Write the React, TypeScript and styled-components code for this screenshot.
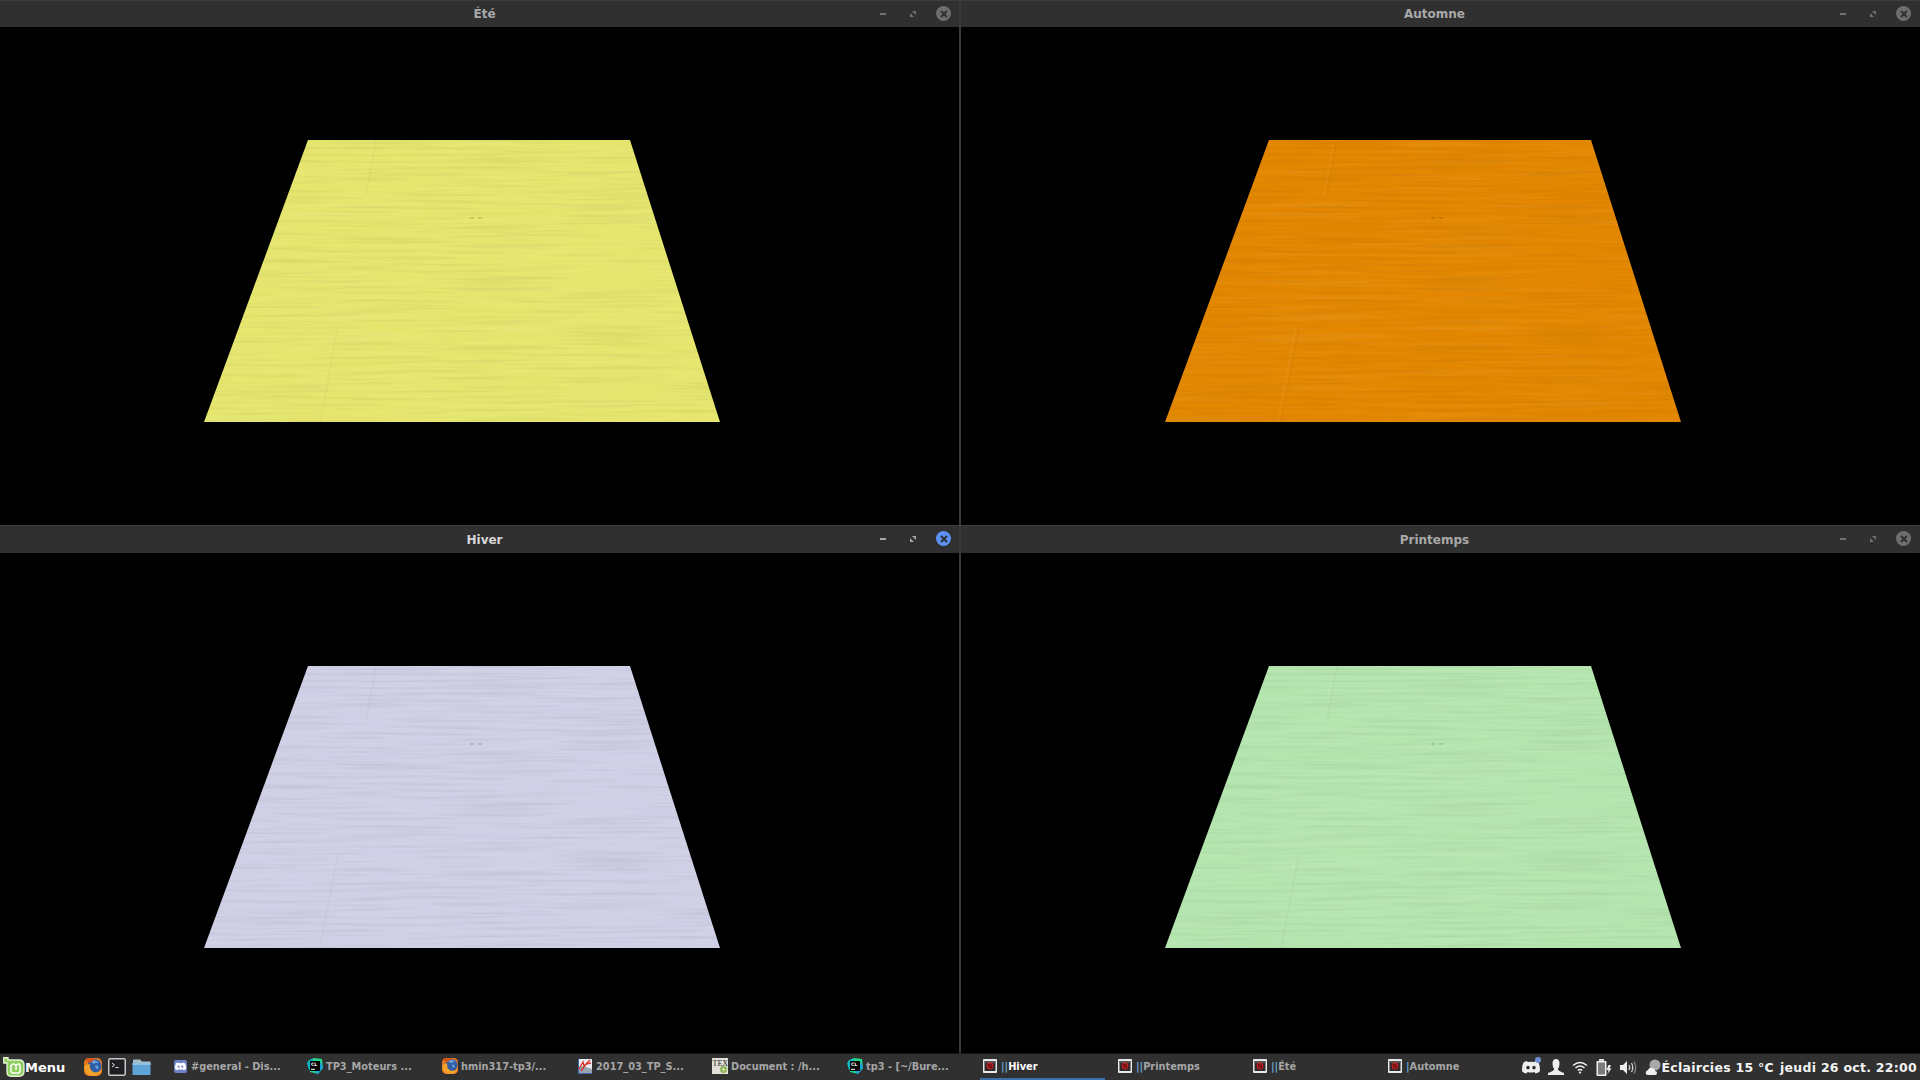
import * as React from 'react'
import styled, { createGlobalStyle } from 'styled-components'

const GlobalStyle = createGlobalStyle`
  html, body {
    margin: 0;
    padding: 0;
    background: #000;
    overflow: hidden;
  }
  #root {
    width: 1920px;
    height: 1080px;
  }
`

const seasons = [
  { title: 'Été', color: '#e6e66f', focus: false },
  { title: 'Automne', color: '#e38700', focus: false },
  { title: 'Hiver', color: '#d0d0e6', focus: true },
  { title: 'Printemps', color: '#b6e6b0', focus: false },
]

const PLANE = '308,113 630,113 720,395 204,395'

const Plane: React.FC<{ color: string; id: string }> = ({ color, id }) => (
  <PlaneSvg viewBox="0 0 959 500">
    <defs>
      <filter id={id} x="0" y="0" width="100%" height="100%">
        <feTurbulence type="fractalNoise" baseFrequency="0.007 0.26" numOctaves={3} seed={4} />
        <feColorMatrix
          type="matrix"
          values="0 0 0 0 1  0 0 0 0 1  0 0 0 0 1  1.5 0 0 0 -0.62"
        />
      </filter>
      <filter id={id + 'd'} x="0" y="0" width="100%" height="100%">
        <feTurbulence type="fractalNoise" baseFrequency="0.009 0.3" numOctaves={3} seed={11} />
        <feColorMatrix
          type="matrix"
          values="0 0 0 0 0  0 0 0 0 0  0 0 0 0 0  1.2 0 0 0 -0.52"
        />
      </filter>
      <clipPath id={id + 'c'}>
        <polygon points={PLANE} />
      </clipPath>
    </defs>
    <polygon points={PLANE} fill={color} />
    <g clipPath={`url(#${id}c)`}>
      <rect x="200" y="113" width="525" height="282" filter={`url(#${id})`} opacity="0.09" />
      <rect x="200" y="113" width="525" height="282" filter={`url(#${id}d)`} opacity="0.1" />
      <path d="M373 113 L363 168 M335 300 L317 395" stroke="#fff" strokeOpacity="0.035" strokeWidth="3" fill="none" />
      <path d="M376 113 L366 168 M338 300 L320 395" stroke="#000" strokeOpacity="0.025" strokeWidth="2" fill="none" />
      <path d="M470 191 h4 M478 191 h4" stroke="#000" strokeOpacity="0.16" strokeWidth="1.5" />
    </g>
  </PlaneSvg>
)

const CinnamonControls: React.FC<{ focus: boolean; right: boolean }> = ({ focus, right }) => (
  <Controls $right={right}>
    <Minimize $focus={focus} />
    <Maximize viewBox="0 0 6 6" width="6" height="6">
      <path d="M2 0 H6 V4 Z M0 2 L4 6 H0 Z" fill={focus ? '#a8a8a8' : '#707070'} />
    </Maximize>
    <CloseBtn $focus={focus}>
      <svg viewBox="0 0 8 8" width="8" height="8">
        <path d="M1 1 L7 7 M7 1 L1 7" stroke="#303030" strokeWidth="2" />
      </svg>
    </CloseBtn>
  </Controls>
)

const MintLogo = () => (
  <svg width="22" height="20" viewBox="0 0 22 20">
    <path d="M0.8 0.8 H5 V3 H16 Q21 3 21 8 V14 Q21 19.2 16 19.2 H8 Q4 19.2 4 15 V6 H0.8 Z" fill="#8fcf5e" stroke="#e3f3d4" strokeWidth="1.4" />
    <path d="M8 8 V14 Q8 16 10 16 H15 Q17 16 17 14 V9 Q17 7 15.2 7 Q13.5 7 13 9 V13 M13 9 Q12.5 7 10.8 7 Q9 7 8.5 8" fill="none" stroke="#fff" strokeWidth="1.5" />
  </svg>
)

const Firefox: React.FC<{ size?: number }> = ({ size = 18 }) => (
  <svg width={size} height={size} viewBox="0 0 18 18">
    <rect width="18" height="18" rx="5" fill="#e8791e" />
    <circle cx="10.5" cy="8" r="7" fill="#2f5fa8" />
    <path d="M7 3 Q12 1 15 5 Q12 4 10 6 Q8 5 7 3 Z" fill="#6fa0da" />
    <path d="M12 7 Q15 8 14 11 Q12 11 11 9 Z" fill="#6fa0da" />
    <path d="M0 9 Q1 18 9 18 Q16 18 18 12 Q13 16 8.5 13.5 Q5 11 6 6 Q2 6 0 9 Z" fill="#f3a12a" />
    <path d="M1 1 Q7 -1 12 1 Q8 2 6.5 5 Q3 4 1 1 Z" fill="#d4551a" />
  </svg>
)

const TerminalIcon = () => (
  <svg width="18" height="18" viewBox="0 0 18 18">
    <rect x="0.75" y="0.75" width="16.5" height="16.5" rx="1.5" fill="#1d1d22" stroke="#c8c8c8" strokeWidth="1.5" />
    <path d="M4 5 L6.5 7 L4 9" fill="none" stroke="#e6e6e6" strokeWidth="1" />
    <path d="M7.5 9.5 H10.5" stroke="#e6e6e6" strokeWidth="1" />
  </svg>
)

const FolderIcon = () => (
  <svg width="19" height="16" viewBox="0 0 19 16">
    <path d="M1 1.5 Q1 0.5 2 0.5 H8 L10 2.5 H18 Q18.5 2.5 18.5 3 V5 H1 Z" fill="#a9bcc9" />
    <rect x="0.5" y="4" width="18" height="12" rx="0.5" fill="#5ea4d6" />
    <rect x="0.5" y="4" width="18" height="2" fill="#8cc0e4" />
  </svg>
)

const DiscordGlyph: React.FC<{ size: number; fill: string; hole: string }> = ({ size, fill, hole }) => (
  <svg width={size} height={size * 0.78} viewBox="0 0 18 14">
    <path d="M5 1 Q2.8 1.4 1.5 2.6 Q-0.4 6.6 0.2 11.4 Q2 13 4.6 13.6 L5.6 12 Q8.9 13 12.4 12 L13.4 13.6 Q16 13 17.8 11.4 Q18.4 6.6 16.5 2.6 Q15.2 1.4 13 1 L12.4 2 Q9 1.4 5.6 2 Z" fill={fill} />
    <ellipse cx="6" cy="7.6" rx="1.7" ry="1.9" fill={hole} />
    <ellipse cx="12" cy="7.6" rx="1.7" ry="1.9" fill={hole} />
  </svg>
)

const DiscordTile = () => (
  <Tile $bg="#6f82c8">
    <DiscordGlyph size={11} fill="#fff" hole="#6f82c8" />
  </Tile>
)

const ClionIcon = () => (
  <svg width="16" height="16" viewBox="0 0 16 16">
    <path d="M1 3 L7 0 L15 1 L16 10 L11 16 L3 14 Z" fill="#21d789" />
    <path d="M0 5 L4 1 L8 3 L2 12 Z" fill="#09b8c9" />
    <path d="M11 16 L16 10 L14 4 L8 14 Z" fill="#1a9dd8" />
    <rect x="3" y="3" width="10" height="10" fill="#000" />
    <text x="4" y="8.4" fontFamily="'DejaVu Sans', sans-serif" fontWeight="700" fontSize="4.6" fill="#fff">CL</text>
    <rect x="4" y="10.8" width="4" height="1" fill="#fff" />
  </svg>
)

const ChartDoc = () => (
  <svg width="14" height="15" viewBox="0 0 14 15">
    <rect width="14" height="15" fill="#e9ecf2" />
    <path d="M0 15 V9 L5 7 L14 10 V15 Z" fill="#9aa4b3" />
    <path d="M0 15 V0" stroke="#3f66ad" strokeWidth="2" />
    <path d="M1 10 L5 3 L6 7 L12 1 M3 12 L8 5 L13 4" fill="none" stroke="#d9302a" strokeWidth="1.3" />
    <path d="M0 14.5 H14" stroke="#3f66ad" />
  </svg>
)

const TexDoc = () => (
  <svg width="16" height="16" viewBox="0 0 16 16">
    <rect width="16" height="16" fill="#dfdfd8" />
    <text x="0.5" y="7.5" fontFamily="'Liberation Serif', serif" fontSize="8" fill="#222">TEX</text>
    <circle cx="11.5" cy="11.5" r="3.4" fill="#8ab04e" />
    <path d="M11.5 9.5 V13.5 M9.5 11.5 H13.5" stroke="#dfeec8" strokeWidth="0.9" />
  </svg>
)

const AppWindowIcon = () => (
  <svg width="14" height="14" viewBox="0 0 14 14">
    <rect width="14" height="14" rx="0.8" fill="#e8e8e8" />
    <rect x="1.5" y="2" width="11" height="10" fill="#2a2a2a" />
    <rect x="1.5" y="2" width="11" height="2" fill="#555" />
    <circle cx="7" cy="7" r="3.4" fill="#d2202a" />
    <path d="M5 5 L9 9" stroke="#30090a" strokeWidth="0.9" />
    <circle cx="7" cy="7" r="2" fill="none" stroke="#30090a" strokeWidth="0.7" />
  </svg>
)

const tasks = [
  { icon: <DiscordTile />, label: '#general - Dis...' },
  { icon: <ClionIcon />, label: 'TP3_Moteurs ...' },
  { icon: <Firefox size={16} />, label: 'hmin317-tp3/...' },
  { icon: <ChartDoc />, label: '2017_03_TP_S...' },
  { icon: <TexDoc />, label: 'Document : /h...' },
  { icon: <ClionIcon />, label: 'tp3 - [~/Bure...' },
]

const windows = [
  { bars: 2, label: 'Hiver', active: true },
  { bars: 2, label: 'Printemps', active: false },
  { bars: 2, label: 'Été', active: false },
  { bars: 1, label: 'Automne', active: false },
]

const App: React.FC = () => (
  <>
    <GlobalStyle />
    <Screen>
      <Desktop>
        {seasons.map((s, i) => (
          <Win key={s.title}>
            <TitleBar>
              <Title $focus={s.focus} $right={i % 2 === 1}>{s.title}</Title>
              <CinnamonControls focus={s.focus} right={i % 2 === 1} />
            </TitleBar>
            <Viewport>
              <Plane color={s.color} id={'tex' + s.title.charCodeAt(0)} />
            </Viewport>
          </Win>
        ))}
      </Desktop>
      <Panel>
        <MenuButton>
          <MintLogo />
          <MenuLabel>Menu</MenuLabel>
        </MenuButton>
        <Launchers>
          <Firefox />
          <TerminalIcon />
          <FolderIcon />
        </Launchers>
        <TaskList>
          {tasks.map((t) => (
            <Task key={t.label}>
              <TaskIcon>{t.icon}</TaskIcon>
              <TaskLabel>{t.label}</TaskLabel>
            </Task>
          ))}
          {windows.map((w) => (
            <Task key={w.label} $active={w.active}>
              <TaskIcon>
                <AppWindowIcon />
              </TaskIcon>
              <TaskLabel $active={w.active}>
                <Bars>{'|'.repeat(w.bars)}</Bars>
                {w.label}
              </TaskLabel>
            </Task>
          ))}
        </TaskList>
        <Tray>
          <TrayIcons>
            <DiscordTray>
              <DiscordGlyph size={18} fill="#eeeeee" hole="#303030" />
              <Dot />
            </DiscordTray>
            <svg width="16" height="17" viewBox="0 0 16 17">
              <path d="M8 0 Q11.5 0 11.5 4.5 Q11.5 8 9.8 10 Q10 12 16 14 V16 H0 V14 Q6 12 6.2 10 Q4.5 8 4.5 4.5 Q4.5 0 8 0 Z" fill="#eeeeee" />
            </svg>
            <svg width="16" height="13" viewBox="0 0 16 13">
              <path d="M1 4.5 Q8 -1.5 15 4.5 M3.5 7 Q8 3 12.5 7 M5.8 9.4 Q8 7.6 10.2 9.4" fill="none" stroke="#eeeeee" strokeWidth="1.5" />
              <path d="M8 13 L6.5 11 Q8 10 9.5 11 Z" fill="#eeeeee" />
            </svg>
            <svg width="16" height="17" viewBox="0 0 16 17">
              <rect x="3" y="0" width="5" height="2" fill="#d8d8d8" />
              <rect x="0.5" y="2" width="10" height="15" rx="1" fill="#f0f0f0" />
              <rect x="2" y="3.5" width="7" height="12" fill="#7c7c7c" />
              <path d="M12.5 6 L10.5 11 H12.5 L11.5 15 L15.5 9.5 H13.5 L15 6 Z" fill="#eeeeee" />
            </svg>
            <svg width="17" height="15" viewBox="0 0 17 15">
              <path d="M0 5 H3 L7 1 V14 L3 10 H0 Z" fill="#eeeeee" />
              <path d="M9 5 Q10.5 7.5 9 10 M11.5 3 Q14 7.5 11.5 12" fill="none" stroke="#d0d0d0" strokeWidth="1.3" />
              <path d="M14 1.5 Q17.5 7.5 14 13.5" fill="none" stroke="#808080" strokeWidth="1.3" />
            </svg>
            <svg width="16" height="17" viewBox="0 0 16 17">
              <circle cx="10" cy="6" r="5.5" fill="#a8a8a8" />
              <path d="M1 15 Q0 12 3 11 Q4 8 7 9 Q10 9 10 12 Q12 12 12 14 Q12 16 10 16 H3 Q1.5 16 1 15 Z" fill="#f0f0f0" />
            </svg>
          </TrayIcons>
          <ClockGroup>
            <ClockText>Éclaircies 15 °C</ClockText>
            <ClockText>jeudi 26 oct. 22:00</ClockText>
          </ClockGroup>
        </Tray>
      </Panel>
    </Screen>
  </>
)

export default App

const Screen = styled.div`
  display: flex;
  flex-direction: column;
  width: 1920px;
  height: 1080px;
  background: #000;
  font-family: 'DejaVu Sans', sans-serif;
`

const Desktop = styled.div`
  display: grid;
  grid-template-columns: 961px 959px;
  grid-template-rows: 525px 528px;
  height: 1053px;
`

const Win = styled.div`
  display: flex;
  flex-direction: column;
  min-width: 0;
  &:nth-child(odd) {
    border-right: 2px solid #3a3a3a;
    box-sizing: border-box;
  }
  &:nth-child(n + 3) > div:first-child {
    height: 28px;
    padding-top: 1px;
  }
`

const TitleBar = styled.div`
  position: relative;
  display: flex;
  flex: none;
  align-items: center;
  justify-content: center;
  height: 27px;
  box-sizing: border-box;
  background: #303030;
  border-top: 1px solid #3c3c3c;
`

const Title = styled.span<{ $focus: boolean; $right: boolean }>`
  font-size: 12px;
  font-weight: 700;
  color: ${(p) => (p.$focus ? '#d6d6d6' : '#a8a8a8')};
  transform: translateX(${(p) => (p.$right ? '-6px' : '5px')});
`

const Controls = styled.div<{ $right: boolean }>`
  position: absolute;
  right: ${(p) => (p.$right ? '9px' : '8px')};
  top: 5px;
  display: flex;
  align-items: center;
  justify-content: space-between;
  height: 15px;
  width: 71px;
`

const Minimize = styled.span<{ $focus: boolean }>`
  display: block;
  width: 6px;
  height: 2px;
  background: ${(p) => (p.$focus ? '#a8a8a8' : '#707070')};
`

const Maximize = styled.svg`
  display: block;
  margin-left: 4px;
`

const CloseBtn = styled.span<{ $focus: boolean }>`
  display: flex;
  align-items: center;
  justify-content: center;
  width: 15px;
  height: 15px;
  border-radius: 50%;
  background: ${(p) => (p.$focus ? '#5c92f6' : '#6e6e6e')};
`

const Viewport = styled.div`
  flex: 1;
  min-height: 0;
  background: #000;
  overflow: hidden;
`

const PlaneSvg = styled.svg`
  display: block;
  width: 959px;
  height: 500px;
`

const Panel = styled.div`
  display: flex;
  align-items: center;
  height: 27px;
  flex: none;
  box-sizing: border-box;
  background: #303030;
  border-top: 1px solid #141414;
`

const MenuButton = styled.div`
  display: flex;
  align-items: center;
  width: 84px;
  padding-left: 3px;
  box-sizing: border-box;
  flex: none;
`

const MenuLabel = styled.span`
  font-size: 13px;
  font-weight: 700;
  color: #fff;
`

const Launchers = styled.div`
  display: flex;
  align-items: center;
  gap: 6px;
  width: 84px;
  flex: none;
`

const TaskList = styled.div`
  display: flex;
  align-self: stretch;
  gap: 10px;
  flex: none;
  padding-left: 2px;
`

const Task = styled.div<{ $active?: boolean }>`
  display: flex;
  align-items: center;
  gap: 3px;
  width: 125px;
  padding-left: 2px;
  box-sizing: border-box;
  border-bottom: 2px solid ${(p) => (p.$active ? '#3c6fa8' : 'transparent')};
`

const TaskIcon = styled.span`
  display: flex;
  align-items: center;
  justify-content: center;
  width: 16px;
  height: 16px;
  flex: none;
`

const Tile = styled.span<{ $bg: string }>`
  display: flex;
  align-items: center;
  justify-content: center;
  width: 13px;
  height: 13px;
  border-radius: 2px;
  background: ${(p) => p.$bg};
`

const TaskLabel = styled.span<{ $active?: boolean }>`
  font-size: 9.8px;
  font-weight: 700;
  white-space: nowrap;
  color: ${(p) => (p.$active ? '#ffffff' : '#a6a6a6')};
`

const Bars = styled.span`
  color: #6fa8d8;
`

const Tray = styled.div`
  display: flex;
  align-items: center;
  margin-left: auto;
  padding-right: 3px;
`

const TrayIcons = styled.div`
  display: flex;
  align-items: center;
  gap: 8px;
`

const ClockGroup = styled.div`
  display: flex;
  gap: 6px;
`

const DiscordTray = styled.span`
  position: relative;
  display: flex;
`

const Dot = styled.span`
  position: absolute;
  top: -3px;
  right: -1px;
  width: 6px;
  height: 6px;
  border-radius: 50%;
  background: #6f8fd8;
`

const ClockText = styled.span`
  font-size: 12.5px;
  font-weight: 700;
  letter-spacing: 0.27px;
  white-space: nowrap;
  color: #f4f4f4;
`
